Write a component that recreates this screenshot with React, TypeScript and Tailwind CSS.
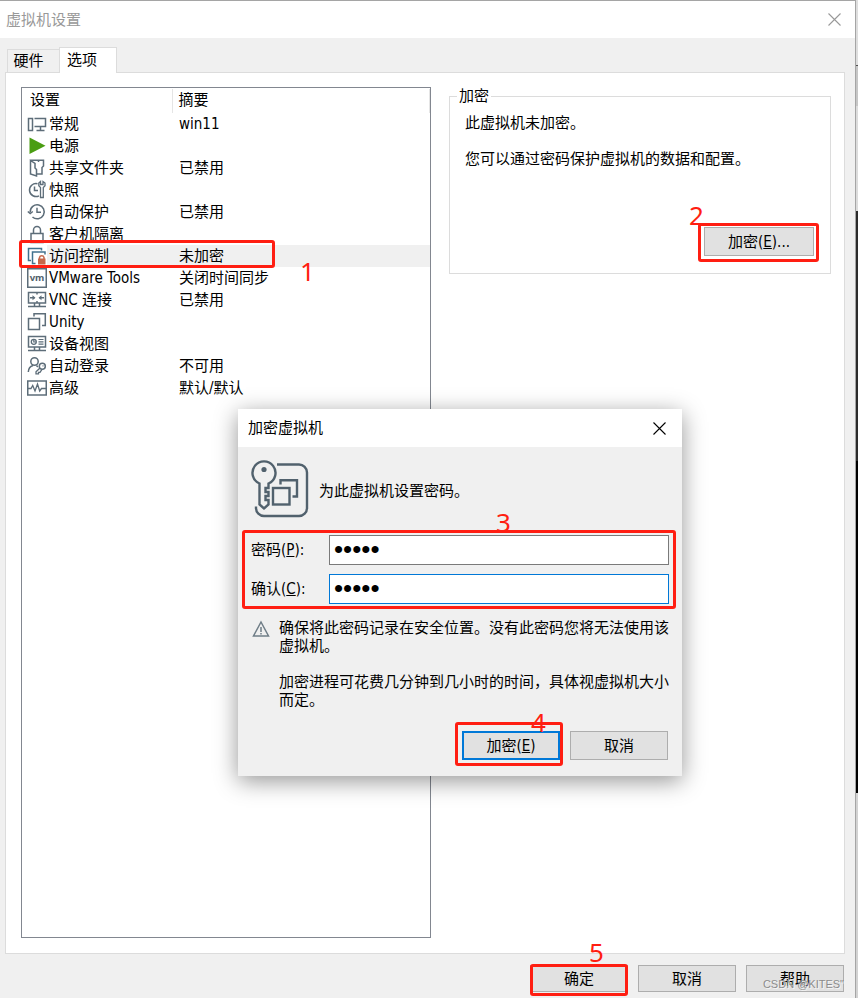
import { useState } from "react";
import type { ReactNode } from "react";

const ICONS: Record<string, ReactNode> = {
  general: (
    <>
      <rect x="1.5" y="4.5" width="4" height="12" />
      <path d="M7.5 4.5H18.5V12.5H7.5M13.5 12.5V16M9.5 16.5H17.5" />
    </>
  ),
  power: <path d="M2.5 1.5L18.5 9.7L2.5 18Z" fill="#4a9d12" stroke="none" />,
  folder: (
    <>
      <path d="M3.5 2.5L8 5.5V10L9.500 11.500V18L3.500 16Z" />
      <path d="M3.5 2.2H16.5V8L15 9.5V16H10" />
      <path d="M11.5 2.5V4" />
    </>
  ),
  snapshot: (
    <>
      <path d="M10.5 3.700A6.500 6.500 0 1 0 12 15.800M7.500 6.500V10.500H11" />
      <path d="M13.500 17.500V7.500L11.800 5.700V3L13.500 1.500V4.500H16V1.500L18 3V5.700L16.300 7.500V17.500Z" strokeWidth="1.3" />
    </>
  ),
  history: (
    <>
      <path d="M3.2 10A7 7 0 1 1 5.5 15" />
      <path d="M0.800 9.500L3.200 11.500L5.800 9.500M10 5.8V10.3H14" />
    </>
  ),
  lock: (
    <>
      <rect x="4" y="9.5" width="12" height="9" />
      <path d="M6.5 9.5V6A3.5 3.5 0 0 1 13.5 6V9.5" />
    </>
  ),
  access: (
    <>
      <path d="M4 14.5H1.5V2.5H14.5V4.5M8.5 17.5H5.5V6H18V8.5" stroke="#41728e" />
      <path d="M12.5 13V11.5A2.3 2.3 0 0 1 17 11.5V13" stroke="#c5674a" />
      <rect x="11" y="12.5" width="7.5" height="6" fill="#c5674a" stroke="none" />
    </>
  ),
  tools: (
    <>
      <rect x="0.75" y="0.75" width="18.5" height="18.5" />
      <text
        x="10"
        y="12.5"
        textAnchor="middle"
        fontSize="9.5"
        fontWeight="700"
        fontFamily="Noto Sans, sans-serif"
        fill="#51616d"
        stroke="none"
      >
        vm
      </text>
    </>
  ),
  vnc: (
    <>
      <rect x="1.5" y="2.5" width="17" height="10.5" />
      <path d="M10 2.5V4.500M10 11V13M3 7.700H7.500M12.500 7.700H17" />
      <path d="M5.500 5.200L8.500 7.700L5.500 10.200ZM14.500 5.200L11.500 7.700L14.500 10.200Z" fill="#5d6d79" stroke="none" />
      <path d="M7.5 13V16M12.5 13V16M1 16.5H19" />
    </>
  ),
  unity: (
    <>
      <rect x="1.5" y="6.5" width="11" height="11" />
      <path d="M7 4.5V1.8H18.3V13.5H15" />
    </>
  ),
  device: (
    <>
      <rect x="1.5" y="2.5" width="17" height="10.5" />
      <circle cx="6.800" cy="7.800" r="2.500" strokeWidth="1.300" />
      <path d="M6.8 5.5V8H9M11.5 5.5H16.5M11.5 7.8H16.5M11.5 10.2H16.5" strokeWidth="1.200" />
      <path d="M7.5 13V16M12.5 13V16M1 16.5H19" />
    </>
  ),
  login: (
    <>
      <circle cx="7.500" cy="5.500" r="3.700" />
      <path d="M1.3 16C1.500 12 3.500 10.300 6 9.500M9.500 9.500L10.800 11" />
      <circle cx="15.300" cy="10.300" r="3" />
      <path d="M13 12L9 15.800V17.800H11.500V16.300H13L15 13.300M15.500 9.800H16.500" strokeWidth="1.300" />
    </>
  ),
  advanced: (
    <>
      <rect x="0.75" y="3" width="18.5" height="14" />
      <path d="M1 10.5H4L5.7 7.5L8 13L10.5 6L12.7 13L14.5 10.5H19" strokeWidth="1.300" />
    </>
  ),
};

const ROWS = [
  { icon: "general", name: "常规", summary: "win11" },
  { icon: "power", name: "电源", summary: "" },
  { icon: "folder", name: "共享文件夹", summary: "已禁用" },
  { icon: "snapshot", name: "快照", summary: "" },
  { icon: "history", name: "自动保护", summary: "已禁用" },
  { icon: "lock", name: "客户机隔离", summary: "" },
  { icon: "access", name: "访问控制", summary: "未加密" },
  { icon: "tools", name: "VMware Tools", summary: "关闭时间同步" },
  { icon: "vnc", name: "VNC 连接", summary: "已禁用" },
  { icon: "unity", name: "Unity", summary: "" },
  { icon: "device", name: "设备视图", summary: "" },
  { icon: "login", name: "自动登录", summary: "不可用" },
  { icon: "advanced", name: "高级", summary: "默认/默认" },
];

function RowIcon({ name }: { name: string }) {
  return (
    <svg
      viewBox="0 0 20 20"
      width={20}
      height={20}
      fill="none"
      stroke="#5d6d79"
      strokeWidth="1.5"
      className="shrink-0"
      aria-hidden
    >
      {ICONS[name]}
    </svg>
  );
}

function CloseIcon() {
  return (
    <svg viewBox="0 0 13 13" width={13} height={13} fill="none" stroke="currentColor" strokeWidth="1.1" aria-hidden>
      <path d="M0.5 0.5L12.5 12.5M12.5 0.5L0.5 12.5" />
    </svg>
  );
}

function KeyIcon() {
  return (
    <svg viewBox="0 0 58 58" width={58} height={58} fill="none" stroke="#51616d" strokeWidth="2.4" aria-hidden>
      <path d="M26 4.5H48A8 8 0 0 1 56 12.5V48A8 8 0 0 1 48 56H13A8 8 0 0 1 5 48V46.5" />
      <path d="M8.500 23.5A11.500 11.500 0 1 1 17.500 23.5V28H14.500V32H17.500V36H14.500V40H17.500V44.500L13 48.500L8.500 44.500Z" />
      <circle cx="13" cy="9.500" r="2.600" fill="#51616d" stroke="none" />
      <rect x="22" y="28" width="16.5" height="16.5" />
      <path d="M29.500 24.500V20.200H46V36.500H41.500" />
    </svg>
  );
}

function WarningIcon() {
  return (
    <svg
      viewBox="0 0 18 18"
      width={18}
      height={18}
      fill="none"
      stroke="#6f7d87"
      strokeWidth="1.5"
      className="shrink-0"
      aria-hidden
    >
      <path d="M9 3L16.500 17H1.500Z" />
      <path d="M9 8V13M9 14V15.500" />
    </svg>
  );
}

// Red frame laid over the control it points at
function Frame({ className }: { className: string }) {
  return <span className={`pointer-events-none absolute rounded-[3px] border-3 border-[#ff1e12] ${className}`} />;
}

function Step({ n, className }: { n: number; className: string }) {
  return (
    <span
      className={`pointer-events-none absolute font-['Noto_Sans',sans-serif] text-[26px] leading-[26px] text-[#ff1e12] ${className}`}
    >
      {n}
    </span>
  );
}

const BUTTON = "h-[27px] w-[98px] border border-[#adadad] bg-[#e1e1e1]";

function SettingsList() {
  const [selected, setSelected] = useState("access");

  return (
    <div className="w-[410px] shrink-0 border border-[#828790] bg-white pt-px">
      <table className="w-full table-fixed border-collapse text-left">
        <thead>
          <tr className="h-6">
            <th className="w-[150px] border-r border-[#e5e5e5] pb-0.5 pl-2 font-normal">设置</th>
            <th className="border-r border-[#e5e5e5] pb-0.5 pl-1.5 font-normal">摘要</th>
          </tr>
        </thead>
        <tbody>
          {ROWS.map((row) => {
            const active = row.icon === selected;
            return (
              <tr key={row.icon} className="h-[22px]" onClick={() => setSelected(row.icon)}>
                <td className="relative p-0 pl-[5px]">
                  <button type="button" className="flex h-[22px] w-full items-center text-left">
                    <RowIcon name={row.icon} />
                    <span
                      className={`flex h-[22px] flex-1 items-center whitespace-nowrap pl-0.5 ${active ? "bg-[#f0f0f0]" : ""}`}
                    >
                      {row.name}
                    </span>
                  </button>
                  {row.icon === "access" && (
                    <>
                      <Frame className="-left-[3px] -top-[5px] z-10 h-[28px] w-[256px]" />
                      <Step n={1} className="left-[278px] top-[13px] z-10" />
                    </>
                  )}
                </td>
                <td className={`p-0 pl-[7px] ${active ? "bg-[#f0f0f0]" : ""}`}>{row.summary}</td>
              </tr>
            );
          })}
        </tbody>
      </table>
    </div>
  );
}

function EncryptDialog() {
  const [password, setPassword] = useState("12345");
  const [confirm, setConfirm] = useState("12345");

  return (
    <div
      role="dialog"
      aria-labelledby="encrypt-title"
      className="absolute left-[238px] top-[409px] z-20 w-[444px] bg-[#f0f0f0] shadow-[0_5px_22px_rgba(0,0,0,0.42)]"
    >
      <div className="flex h-[38px] items-center justify-between bg-white pl-2.5 pr-4">
        <h2 id="encrypt-title">加密虚拟机</h2>
        <button type="button" aria-label="关闭">
          <CloseIcon />
        </button>
      </div>

      <div className="flex items-center gap-2.5 pl-[13px] pt-[13px]">
        <KeyIcon />
        <p className="pt-1">为此虚拟机设置密码。</p>
      </div>

      <div className="relative ml-1 mr-1.5 mt-3 flex flex-col gap-[9px] rounded-[3px] border-3 border-[#ff1e12] py-0.5 pl-1.5 pr-1">
        <Step n={3} className="left-[251px] -top-[24px]" />
        <div className="flex items-center">
          <label htmlFor="password" className="w-[78px]">
            密码(<u>P</u>):
          </label>
          <input
            id="password"
            type="password"
            value={password}
            onChange={(e) => setPassword(e.target.value)}
            className="h-[30px] min-w-0 flex-1 border border-[#7a7a7a] bg-white px-1 pb-0.5 font-['Liberation_Sans',sans-serif] text-[26px] leading-[26px] outline-none"
          />
        </div>
        <div className="flex items-center">
          <label htmlFor="confirm" className="w-[78px]">
            确认(<u>C</u>):
          </label>
          <input
            id="confirm"
            type="password"
            value={confirm}
            onChange={(e) => setConfirm(e.target.value)}
            className="h-[30px] min-w-0 flex-1 border border-[#0078d7] bg-white px-1 pb-0.5 font-['Liberation_Sans',sans-serif] text-[26px] leading-[26px] outline-none"
          />
        </div>
      </div>

      <div className="mt-2.5 flex gap-[9px] pl-3.5 pr-2.5">
        <WarningIcon />
        <div className="flex flex-col gap-[18px] leading-[18px]">
          <p>确保将此密码记录在安全位置。没有此密码您将无法使用该虚拟机。</p>
          <p>加密进程可花费几分钟到几小时的时间，具体视虚拟机大小而定。</p>
        </div>
      </div>

      <div className="mt-[22px] flex justify-end gap-2.5 pb-4 pr-3.5">
        <div className="relative">
          <button type="button" className="h-[29px] w-[98px] border-2 border-[#0078d7] bg-[#e1e1e1]">
            加密(<u>E</u>)
          </button>
          <Frame className="-left-[7px] -top-[9px] h-[44px] w-[108px]" />
          <Step n={4} className="left-[69px] -top-[22px]" />
        </div>
        <button type="button" className="h-[29px] w-[98px] border border-[#adadad] bg-[#e1e1e1]">
          取消
        </button>
      </div>
    </div>
  );
}

export default function App() {
  return (
    <div className="relative flex min-h-screen bg-[#f0f0f0] font-['DejaVu_Sans_Condensed','Noto_Sans_CJK_SC',sans-serif] text-[15px] leading-[22px] text-black">
      <main className="flex min-w-0 flex-1 flex-col border-r border-t border-[#a5a5a5]">
        <header className="flex h-[37px] shrink-0 items-center justify-between bg-white pl-1.5 pr-[14px] text-[#999999]">
          <h1>虚拟机设置</h1>
          <button type="button" aria-label="关闭">
            <CloseIcon />
          </button>
        </header>

        <div role="tablist" className="z-10 ml-[7px] mt-[9px] flex items-end">
          <button
            type="button"
            role="tab"
            aria-selected="false"
            className="h-6 w-[52px] border border-r-0 border-[#dcdcdc] pr-2.5"
          >
            硬件
          </button>
          <button
            type="button"
            role="tab"
            aria-selected="true"
            className="h-[26px] w-[58px] border border-b-0 border-[#dcdcdc] bg-white pb-0.5 pr-3"
          >
            选项
          </button>
        </div>

        <div className="-mt-px ml-[5px] mr-2.5 flex flex-1 border border-[#dcdcdc] bg-white pb-[15px] pl-[15px] pr-[13px] pt-[14px]">
          <SettingsList />
          <fieldset className="ml-[18px] h-[187px] min-w-0 flex-1 border border-[#dcdcdc] pl-[15px] pr-4">
            <legend className="-ml-2 px-0.5 leading-[18px]">加密</legend>
            <p className="mt-[7px]">此虚拟机未加密。</p>
            <p className="mt-[14px]">您可以通过密码保护虚拟机的数据和配置。</p>
            <div className="mt-[57px] flex justify-end">
              <div className="relative">
                <button type="button" className="h-[29px] w-[110px] border border-[#adadad] bg-[#e1e1e1]">
                  加密(<u>E</u>)...
                </button>
                <Frame className="-left-[6px] -top-[4px] h-[39px] w-[121px]" />
                <Step n={2} className="-left-[15px] -top-[25px]" />
              </div>
            </div>
          </fieldset>
        </div>

        <footer className="flex justify-end gap-2.5 pb-1.5 pr-[11px] pt-[11px]">
          <div className="relative">
            <button type="button" className={BUTTON}>
              确定
            </button>
            <Frame className="left-0 -top-px h-[32px] w-[98px]" />
            <Step n={5} className="left-[59px] -top-[26px]" />
          </div>
          <button type="button" className={BUTTON}>
            取消
          </button>
          <div className="relative">
            <button type="button" className={BUTTON}>
              帮助
            </button>
            <span className="pointer-events-none absolute right-0 top-[11px] whitespace-nowrap font-['Liberation_Sans',sans-serif] text-[11px] leading-4 text-[#8c8c8c] [text-shadow:1px_1px_0_#f5f5f5]">
              CSDN @KITES"
            </span>
          </div>
        </footer>
      </main>

      {/* sliver of whatever sits behind the window */}
      <div className="flex w-0.5 shrink-0 flex-col" aria-hidden>
        <div className="h-[65px] bg-[#dedede]" />
        <div className="h-px bg-[#505050]" />
        <div className="h-10 bg-[#c6c6c6]" />
        <div className="h-[105px] bg-[#dcdcdc]" />
        <div className="h-[250px] bg-[#2b2b2b]" />
        <div className="h-[332px] bg-black" />
        <div className="flex-1 bg-[#d2d2d2]" />
      </div>

      <EncryptDialog />
    </div>
  );
}
